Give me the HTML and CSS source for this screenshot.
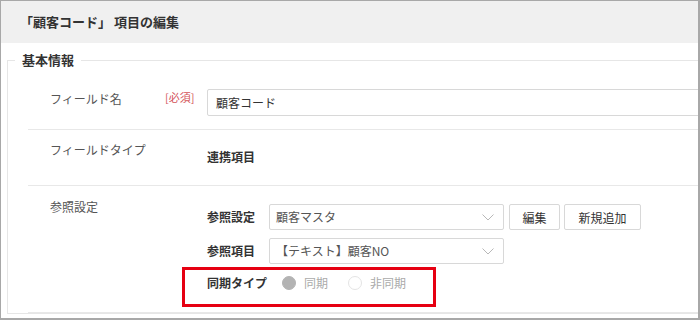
FILE: index.html
```html
<!DOCTYPE html>
<html lang="ja">
<head>
    <meta charset="UTF-8">
    <title>項目の編集</title>
    <link rel="stylesheet" href="styles.css">
</head>
<body>

    <div class="frame">
        <!-- Header -->
        <div class="header">「顧客コード」 項目の編集</div>

        <fieldset class="group">
            <legend>基本情報</legend>

            <div class="row row-name">
                <div class="label">フィールド名</div>
                <div class="req">[必須]</div>
                <div class="body">
                    <div class="text-input">顧客コード</div>
                </div>
            </div>

            <div class="row row-type">
                <div class="label">フィールドタイプ</div>
                <div class="req"></div>
                <div class="body">
                    <div class="value">連携項目</div>
                </div>
            </div>

            <div class="row row-ref">
                <div class="label">参照設定</div>
                <div class="req"></div>
                <div class="body">
                    <div class="sub">
                        <div class="sub-label">参照設定</div>
                        <div class="select">
                            <span>顧客マスタ</span>
                            <svg width="12" height="7" viewBox="0 0 12 7"><polyline points="0.5,0.5 6,6 11.5,0.5" fill="none" stroke="#b8b8b8" stroke-width="1"/></svg>
                        </div>
                        <button class="btn btn-edit">編集</button>
                        <button class="btn btn-new">新規追加</button>
                    </div>
                    <div class="sub sub-item">
                        <div class="sub-label">参照項目</div>
                        <div class="select">
                            <span>【テキスト】顧客NO</span>
                            <svg width="12" height="7" viewBox="0 0 12 7"><polyline points="0.5,0.5 6,6 11.5,0.5" fill="none" stroke="#b8b8b8" stroke-width="1"/></svg>
                        </div>
                    </div>
                    <div class="highlight">
                        <div class="sub-label sync-label">同期タイプ</div>
                        <span class="radio checked"></span>
                        <span class="radio-text">同期</span>
                        <span class="radio"></span>
                        <span class="radio-text">非同期</span>
                    </div>
                </div>
            </div>
        </fieldset>
    </div>

</body>
</html>
```

FILE: styles.css
```css
body {
    margin: 0;
    font-family: "Noto Sans CJK JP", "Noto Sans", sans-serif;
    background-color: #fff;
}

.frame {
    width: 700px;
    height: 320px;
    box-sizing: border-box;
    border: 1px solid #a8a8a8;
    border-right-width: 2px;
    border-bottom-width: 2px;
    overflow: hidden;
    background: #fff;
}

.header {
    height: 42px;
    line-height: 42px;
    padding-left: 19px;
    background-color: #f0f0f0;
    font-size: 13px;
    font-weight: bold;
    color: #333;
}

.group {
    width: 720px;
    min-width: 0;
    margin: 8px 0 0 6px;
    padding: 0 0 0 20px;
    border: 1px solid #e6e6e6;
}

.group legend {
    margin-left: -13px;
    padding: 0 7px 0 7px;
    font-size: 13px;
    line-height: 18px;
    font-weight: bold;
    color: #333;
}

.row {
    display: flex;
    align-items: flex-start;
    padding-left: 22px;
    border-bottom: 1px solid #e8e8e8;
    font-size: 12px;
    line-height: 20px;
}

.row-name {
    padding-top: 20px;
    padding-bottom: 13px;
}

.row-type {
    padding-top: 10px;
    padding-bottom: 18px;
}

.row-ref {
    padding-top: 11px;
    padding-bottom: 5px;
}

.label {
    width: 115px;
    color: #555;
}

.req {
    width: 42px;
    color: #d4545a;
    font-size: 11px;
    margin-top: -2px;
}

.body {
    flex: 1;
}

.text-input {
    height: 25px;
    line-height: 25px;
    border: 1px solid #d8d8d8;
    border-radius: 2px;
    padding-left: 8px;
    color: #333;
}

.value {
    margin-top: 7px;
    font-weight: bold;
    color: #333;
}

.sub {
    display: flex;
    align-items: center;
    margin-top: 7px;
}

.sub-item {
    margin-top: 8px;
}

.sub-label {
    width: 62px;
    font-weight: bold;
    color: #333;
}

.select {
    width: 218px;
    height: 24px;
    border: 1px solid #d8d8d8;
    border-radius: 2px;
    display: flex;
    align-items: center;
    justify-content: space-between;
    padding: 0 9px 0 6px;
    color: #555;
}

.btn {
    height: 26px;
    margin-left: 5px;
    padding: 0;
    border: 1px solid #d8d8d8;
    border-radius: 2px;
    background: #fff;
    font-family: inherit;
    font-size: 12px;
    color: #333;
}

.btn-edit {
    width: 51px;
}

.btn-new {
    width: 77px;
    margin-left: 4px;
}

.highlight {
    display: flex;
    align-items: center;
    width: 226px;
    height: 20px;
    margin: 3px 0 0 -25px;
    padding: 3px 0 11px 22px;
    border: 3px solid #e60012;
}

.sync-label {
    width: 75px;
}

.radio {
    width: 12px;
    height: 12px;
    border-radius: 50%;
    border: 1px solid #e4e4e4;
    background: #fff;
}

.radio.checked {
    border-color: #b3b3b3;
    background: #b3b3b3;
}

.radio-text {
    margin-left: 8px;
    margin-right: 20px;
    color: #aaa;
}
```
